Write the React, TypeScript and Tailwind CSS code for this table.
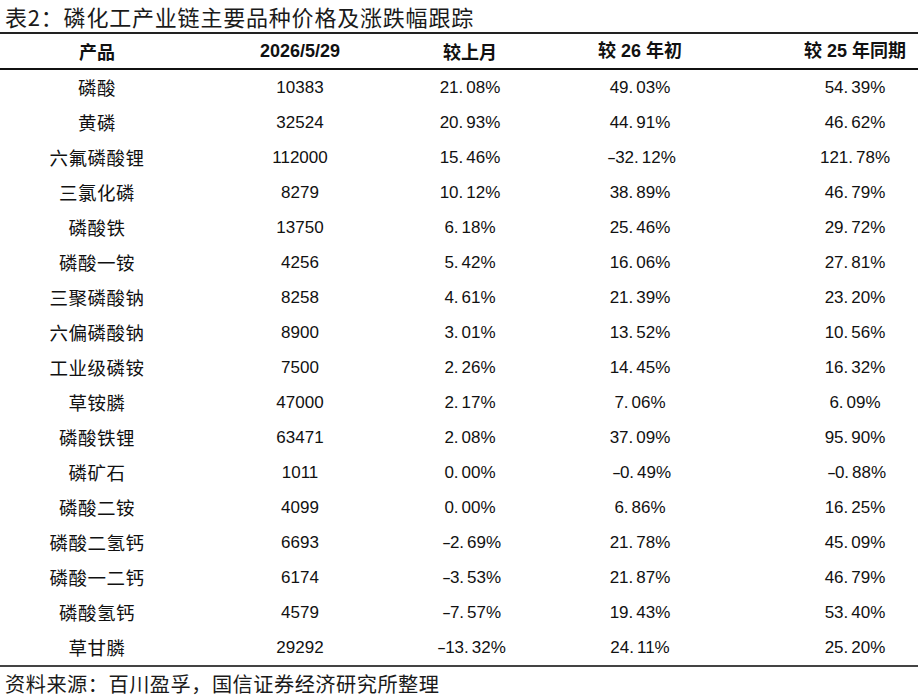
const rows: [string, string, string, string, string][] = [
  ["磷酸", "10383", "21.08%", "49.03%", "54.39%"],
  ["黄磷", "32524", "20.93%", "44.91%", "46.62%"],
  ["六氟磷酸锂", "112000", "15.46%", "-32.12%", "121.78%"],
  ["三氯化磷", "8279", "10.12%", "38.89%", "46.79%"],
  ["磷酸铁", "13750", "6.18%", "25.46%", "29.72%"],
  ["磷酸一铵", "4256", "5.42%", "16.06%", "27.81%"],
  ["三聚磷酸钠", "8258", "4.61%", "21.39%", "23.20%"],
  ["六偏磷酸钠", "8900", "3.01%", "13.52%", "10.56%"],
  ["工业级磷铵", "7500", "2.26%", "14.45%", "16.32%"],
  ["草铵膦", "47000", "2.17%", "7.06%", "6.09%"],
  ["磷酸铁锂", "63471", "2.08%", "37.09%", "95.90%"],
  ["磷矿石", "1011", "0.00%", "-0.49%", "-0.88%"],
  ["磷酸二铵", "4099", "0.00%", "6.86%", "16.25%"],
  ["磷酸二氢钙", "6693", "-2.69%", "21.78%", "45.09%"],
  ["磷酸一二钙", "6174", "-3.53%", "21.87%", "46.79%"],
  ["磷酸氢钙", "4579", "-7.57%", "19.43%", "53.40%"],
  ["草甘膦", "29292", "-13.32%", "24.11%", "25.20%"],
]

// the source font draws a wide full stop and a long minus, so widen them
function Pct({ v }: { v: string }) {
  const neg = v.startsWith("-")
  const [a, b] = (neg ? v.slice(1) : v).split(".")
  return (
    <span>
      {neg && (
        <span className="inline-block w-[11px]">
          <span className="inline-block scale-x-[1.6] origin-left">-</span>
        </span>
      )}
      {a}.<span className="ml-[3px]">{b}</span>
    </span>
  )
}

const grid = "grid grid-cols-[194px_212px_128px_212px_1fr]"

export default function App() {
  return (
    <div className="w-[918px] h-[698px] bg-white text-[#111] font-['Liberation_Sans','Noto_Sans_CJK_SC',sans-serif] overflow-hidden">
      <div className="h-[32px] pl-[5px] flex items-center text-[22px] tracking-[0.8px] font-['Noto_Sans_CJK_SC',sans-serif] text-[#1a1a1a]">
        表2：磷化工产业链主要品种价格及涨跌幅跟踪
      </div>

      <div className="border-t-2 border-b-2 border-t-[#222] border-b-[#444]">
        <div className={`${grid} h-[36px] items-center border-b-2 border-[#111] text-[18px] font-bold`}>
          <div className="text-center font-['Noto_Sans_CJK_SC',sans-serif]">产品</div>
          <div className="text-center">2026/5/29</div>
          <div className="text-center font-['Noto_Sans_CJK_SC',sans-serif]">较上月</div>
          <div className="text-center">较 26 年初</div>
          <div className="text-center pl-[46px]">较 25 年同期</div>
        </div>

        {rows.map((r) => (
          <div key={r[0]} className={`${grid} h-[35px] items-center text-[17px]`}>
            <div className="text-center font-['Noto_Sans_CJK_SC',sans-serif] text-[18.5px] tracking-[0.5px]">{r[0]}</div>
            <div className="text-center">{r[1]}</div>
            <div className="text-center"><Pct v={r[2]} /></div>
            <div className="text-center"><Pct v={r[3]} /></div>
            <div className="text-center pl-[46px]"><Pct v={r[4]} /></div>
          </div>
        ))}
      </div>

      <div className="pl-[5px] pt-[2px] text-[20.2px] tracking-[0.5px] font-['Noto_Sans_CJK_SC',sans-serif] text-[#1a1a1a]">
        资料来源：百川盈孚，国信证券经济研究所整理
      </div>
    </div>
  )
}
